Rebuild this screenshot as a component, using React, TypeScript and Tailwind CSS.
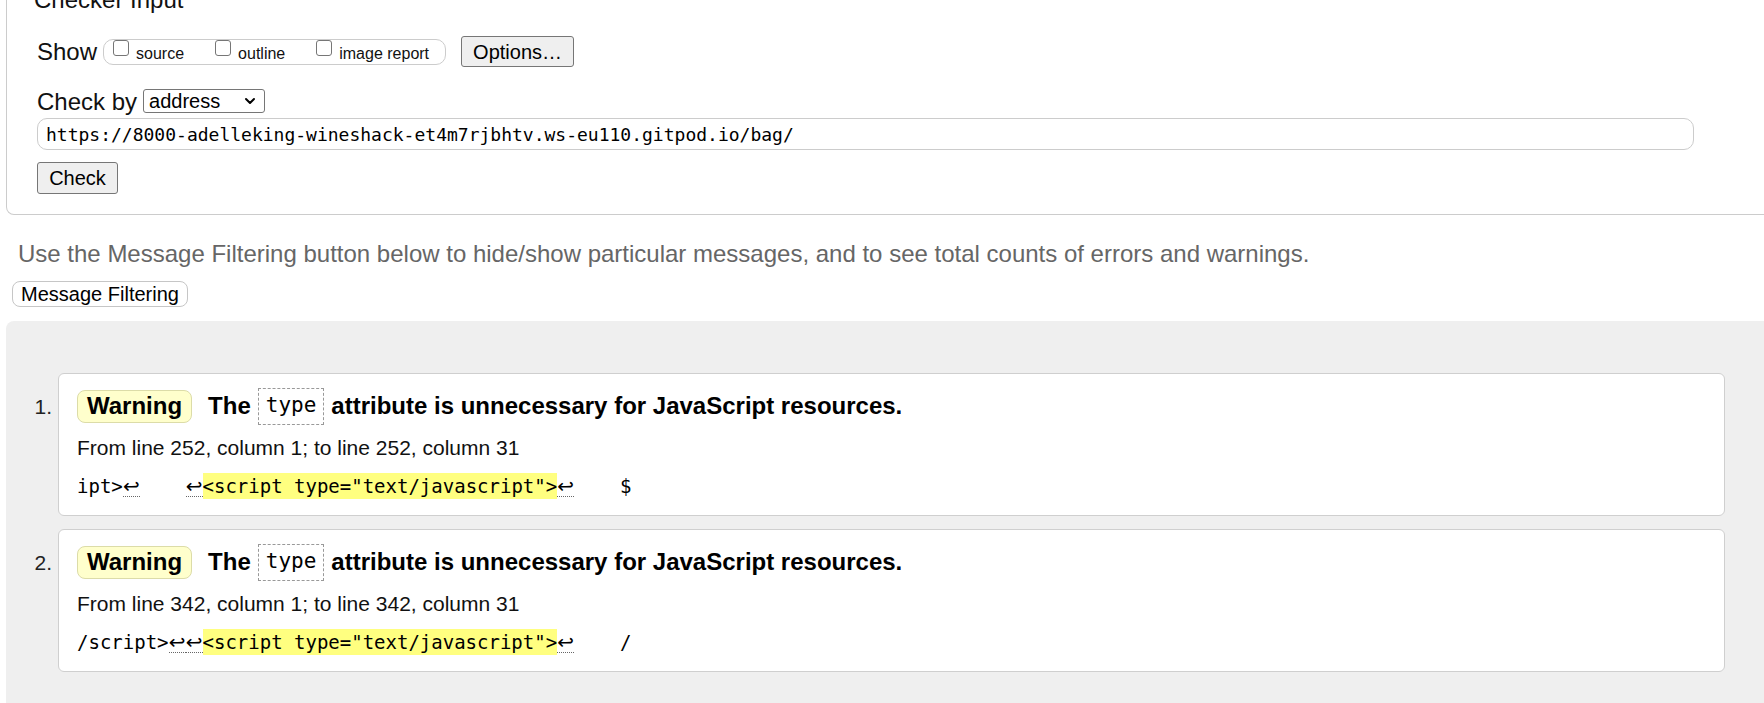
import { ChevronDown } from "lucide-react";

interface Message {
  id: number;
  location: string;
  before: string;
  highlight: string;
  after: string;
}

const messages: Message[] = [
  {
    id: 1,
    location: "From line 252, column 1; to line 252, column 31",
    before: "ipt>↩    ↩",
    highlight: '<script type="text/javascript">',
    after: "↩    $",
  },
  {
    id: 2,
    location: "From line 342, column 1; to line 342, column 31",
    before: "/script>↩↩",
    highlight: '<script type="text/javascript">',
    after: "↩    /",
  },
];

const showOptions = ["source", "outline", "image report"];

function CodeText({ text }: { text: string }) {
  return (
    <>
      {text.split(/(↩)/).map((part, i) =>
        part === "↩" ? (
          <span
            key={i}
            className="inline-block w-[17px] text-center leading-[20px] text-[20px] font-['DejaVu_Sans',sans-serif] border-b border-dotted border-[#666]"
          >
            ↩
          </span>
        ) : part ? (
          <span key={i}>{part}</span>
        ) : null
      )}
    </>
  );
}

function MessageCard({ msg }: { msg: Message }) {
  return (
    <li className="flex gap-[6px]">
      <div className="w-[46px] pt-[19px] text-right text-[21px] leading-[30px] text-[#222]">
        {msg.id}.
      </div>
      <div className="w-[1667px] bg-white border border-[#cfcfcf] rounded-[6px] pt-[13px] pb-[14px] pl-[18px]">
        <div className="flex items-center h-[38px]">
          <span className="inline-flex items-center h-[33px] px-[9px] rounded-[8px] border border-[#dcdca8] bg-[#ffffcc] text-[24px] font-bold text-black">
            Warning
          </span>
          <h3 className="ml-[16px] flex items-center gap-[7px] text-[24px] font-bold text-black">
            <span>The</span>
            <code className="inline-flex items-center h-[37px] px-[7px] border border-dashed border-[#999] font-['DejaVu_Sans_Mono',monospace] text-[21px] font-normal">
              type
            </code>
            <span>attribute is unnecessary for JavaScript resources.</span>
          </h3>
        </div>
        <p className="mt-[8px] text-[21px] leading-[30px] text-[#111]">{msg.location}</p>
        <p className="mt-[8px] text-[19px] leading-[30px] text-black whitespace-pre font-['DejaVu_Sans_Mono',monospace]">
          <CodeText text={msg.before} />
          <span className="bg-[#ffff80] py-[2px]">{msg.highlight}</span>
          <CodeText text={msg.after} />
        </p>
      </div>
    </li>
  );
}

export default function App() {
  return (
    <div className="w-[1764px] h-[703px] overflow-hidden bg-white font-['Liberation_Sans',Arial,sans-serif] text-[#111]">
      {/* checker input fieldset, scrolled so its top sits above the window */}
      <div className="-mt-[14px] ml-[6px] w-[1800px] border-x border-b border-[#cccccc] rounded-b-[8px] pl-[30px] pb-[20px]">
        <div className="-ml-[3px] h-[28px] text-[24px] leading-[28px]">Checker Input</div>

        <div className="mt-[22px] flex items-center h-[31px]">
          <span className="text-[24px] leading-[28px]">Show</span>
          <div className="ml-[6px] flex items-start h-[26px] w-[343px] border border-[#cccccc] rounded-[10px] pl-[9px]">
            {showOptions.map((opt, i) => (
              <label
                key={opt}
                className={`flex items-start gap-[7px] ${i > 0 ? "ml-[31px]" : ""}`}
              >
                <input
                  type="checkbox"
                  className="appearance-none w-[16px] h-[16px] border border-[#767676] rounded-[3px] bg-white"
                />
                <span className="mt-[5px] text-[16px] leading-[18px]">{opt}</span>
              </label>
            ))}
          </div>
          <button className="ml-[15px] w-[113px] h-[31px] border border-[#767676] rounded-[3px] bg-[#efefef] text-[20px] leading-none text-black">
            Options…
          </button>
        </div>

        <div className="mt-[23px] flex items-center h-[24px]">
          <span className="text-[24px] leading-[24px]">Check by</span>
          <div className="relative ml-[6px]">
            <select className="appearance-none h-[24px] w-[122px] border border-[#767676] rounded-[3px] bg-white pl-[5px] text-[20px] leading-[22px] text-black">
              <option>address</option>
            </select>
            <ChevronDown
              className="absolute right-[7px] top-[4px] w-[16px] h-[16px] text-black pointer-events-none"
              strokeWidth={3}
            />
          </div>
        </div>

        <input
          type="text"
          readOnly
          value="https://8000-adelleking-wineshack-et4m7rjbhtv.ws-eu110.gitpod.io/bag/"
          className="mt-[4px] block w-[1657px] h-[32px] border border-[#cccccc] rounded-[10px] pl-[8px] text-[18px] font-['DejaVu_Sans_Mono',monospace] text-black"
        />

        <button className="mt-[12px] block w-[81px] h-[32px] border border-[#767676] rounded-[3px] bg-[#efefef] text-[20px] leading-none text-black">
          Check
        </button>
      </div>

      <p className="mt-[25px] ml-[18px] text-[24px] leading-[28px] text-[#666666]">
        Use the Message Filtering button below to hide/show particular messages, and to see total counts of errors and warnings.
      </p>

      <button className="mt-[13px] ml-[12px] block w-[176px] h-[26px] border border-[#c6c6c6] rounded-[8px] bg-white text-[20px] leading-none text-black">
        Message Filtering
      </button>

      <div className="mt-[14px] ml-[6px] w-[1800px] h-[400px] bg-[#efefef] rounded-tl-[8px] pt-[52px]">
        <ol className="flex flex-col gap-[13px]">
          {messages.map((m) => (
            <MessageCard key={m.id} msg={m} />
          ))}
        </ol>
      </div>
    </div>
  );
}
